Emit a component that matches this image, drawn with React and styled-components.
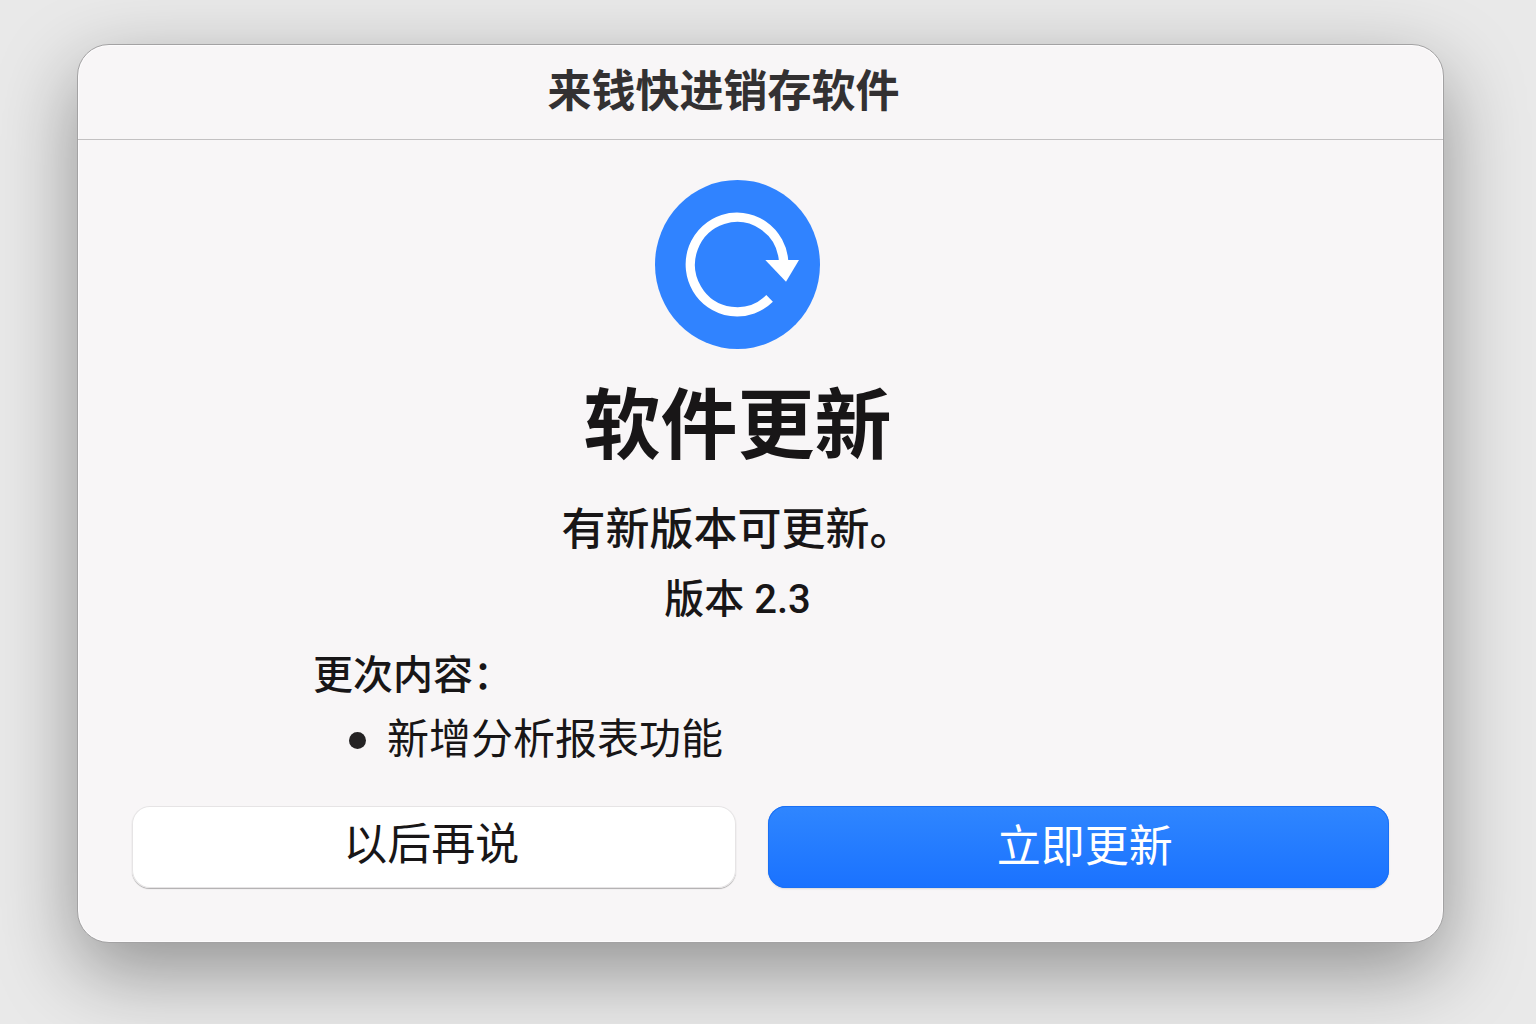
import React from 'react'
import styled, { createGlobalStyle, css } from 'styled-components'

const GlobalStyle = createGlobalStyle`
  * {
    box-sizing: border-box;
    margin: 0;
    padding: 0;
  }
  body {
    background: #e9e9e9;
    color: #181617;
    font-family: Roboto, 'Noto Sans CJK SC', sans-serif;
  }
`

const Page = styled.main`
  min-height: 100vh;
  padding: 44px 92px 0 77px;
  overflow: hidden;
`

const Dialog = styled.section`
  border: 1px solid #a3a2a3;
  border-radius: 32px;
  background: #f8f6f7;
  box-shadow:
    inset 0 0 0 1px #fdfcfd,
    0 28px 80px rgba(0, 0, 0, 0.38);
`

const TitleBar = styled.header`
  padding: 15px 74px 15px 0;
  border-bottom: 1px solid #c3c1c2;
  text-align: center;
`

const AppName = styled.h1`
  color: #333132;
  font-size: 44px;
  font-weight: 700;
  line-height: 64px;
`

const Body = styled.div`
  padding: 40px 54px 54px;
`

const Summary = styled.div`
  display: flex;
  flex-direction: column;
  align-items: center;
  padding-right: 46px;
`

const UpdateIcon = styled.svg`
  display: block;
  width: 165px;
  height: 169px;
`

const Heading = styled.h2`
  margin-top: 30px;
  font-size: 77px;
  font-weight: 700;
  line-height: 96px;
`

const Message = styled.p`
  margin-top: 27px;
  font-size: 44px;
  font-weight: 500;
  line-height: 56px;
`

const Version = styled.p`
  margin-top: 14px;
  font-size: 40px;
  font-weight: 500;
  line-height: 56px;
`

const Notes = styled.div`
  margin-top: 20px;
  padding-left: 181px;
`

const NotesTitle = styled.h3`
  font-size: 40px;
  font-weight: 500;
  line-height: 56px;
`

const NotesList = styled.ul`
  margin-top: 8px;
  padding-left: 36px;
  list-style: none;
`

const NotesItem = styled.li`
  display: flex;
  align-items: center;
  gap: 21px;
  font-size: 42px;
  line-height: 56px;

  &::before {
    content: '';
    width: 17px;
    height: 17px;
    border-radius: 50%;
    background: #252324;
  }
`

const Actions = styled.div`
  display: grid;
  grid-template-columns: 604fr 620fr;
  gap: 32px;
  margin-top: 38px;
`

const Button = styled.button`
  padding: 7px 6px 11px 0;
  border: 0;
  border-radius: 18px;
  font-family: inherit;
  font-size: 44px;
  line-height: 64px;
  cursor: pointer;

  ${({ $primary }) =>
    $primary
      ? css`
          padding: 9px 0 9px 12px;
          background: linear-gradient(#2f86ff, #1a72ff);
          box-shadow:
            inset 0 0 0 1px #1a70f5,
            0 1px 2px rgba(0, 0, 0, 0.12);
          color: #fff;
        `
      : css`
          background: #fff;
          box-shadow:
            inset 0 0 0 1px #e6e4e5,
            0 1px 1px rgba(0, 0, 0, 0.3);
          color: #181617;
        `}
`

const notes = ['新增分析报表功能']

const App = () => {
  return (
    <>
      <GlobalStyle />
      <Page>
        <Dialog role='dialog' aria-labelledby='app-name'>
          <TitleBar>
            <AppName id='app-name'>来钱快进销存软件</AppName>
          </TitleBar>
          <Body>
            <Summary>
              <UpdateIcon viewBox='0 0 165 169' aria-hidden='true'>
                <ellipse cx='82.5' cy='84.5' rx='82.5' ry='84.5' fill='#3083ff' />
                <path
                  d='M128.6 81A46.7 47.3 0 1 0 114.6 118.4'
                  fill='none'
                  stroke='#fff'
                  strokeWidth='9.4'
                />
                <path d='M110.3 80H144L131 101.7Z' fill='#fff' />
              </UpdateIcon>
              <Heading>软件更新</Heading>
              <Message>有新版本可更新。</Message>
              <Version>版本 2.3</Version>
            </Summary>
            <Notes>
              <NotesTitle>更次内容：</NotesTitle>
              <NotesList>
                {notes.map((note) => (
                  <NotesItem key={note}>{note}</NotesItem>
                ))}
              </NotesList>
            </Notes>
            <Actions>
              <Button type='button'>以后再说</Button>
              <Button type='button' $primary>
                立即更新
              </Button>
            </Actions>
          </Body>
        </Dialog>
      </Page>
    </>
  )
}

export default App
